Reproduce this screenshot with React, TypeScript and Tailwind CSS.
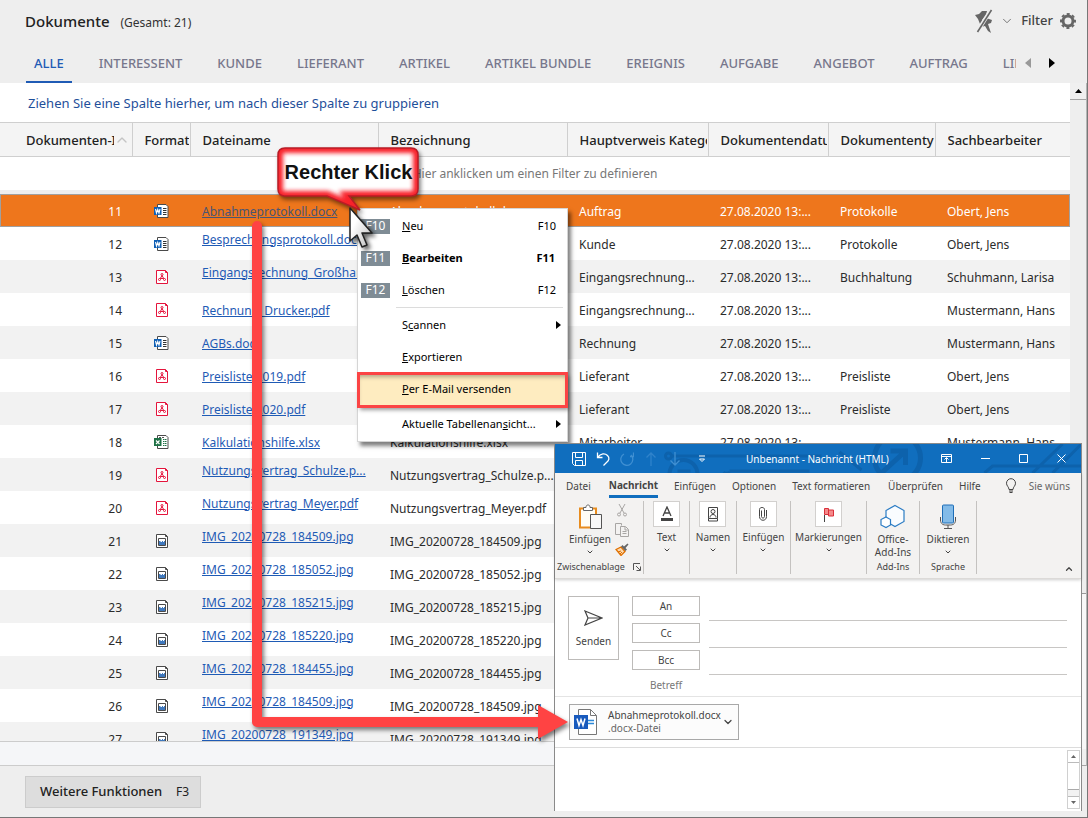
import React from 'react';
import { ChevronDown, ChevronUp } from 'lucide-react';

type Format = 'word' | 'pdf' | 'excel' | 'image';

interface Doc {
  id: number;
  format: Format;
  file: string;
  title: string;
  category?: string;
  date?: string;
  type?: string;
  owner?: string;
  raised?: boolean;
}

const tabs = [
  'ALLE',
  'INTERESSENT',
  'KUNDE',
  'LIEFERANT',
  'ARTIKEL',
  'ARTIKEL BUNDLE',
  'EREIGNIS',
  'AUFGABE',
  'ANGEBOT',
  'AUFTRAG',
  'LIEFERSCHEIN'
];

const docs: Doc[] = [
  { id: 11, format: 'word', file: 'Abnahmeprotokoll.docx', title: 'Abnahmeprotokoll.docx', category: 'Auftrag', date: '27.08.2020 13:...', type: 'Protokolle', owner: 'Obert, Jens' },
  { id: 12, format: 'word', file: 'Besprechungsprotokoll.docx', title: 'Besprechungsprotokoll', category: 'Kunde', date: '27.08.2020 13:...', type: 'Protokolle', owner: 'Obert, Jens', raised: true },
  { id: 13, format: 'pdf', file: 'Eingangsrechnung_Großhandel', title: 'Eingangsrechnung', category: 'Eingangsrechnung...', date: '27.08.2020 13:...', type: 'Buchhaltung', owner: 'Schuhmann, Larisa', raised: true },
  { id: 14, format: 'pdf', file: 'Rechnung_Drucker.pdf', title: 'Rechnung_Drucker.pdf', category: 'Eingangsrechnung...', date: '27.08.2020 13:...', owner: 'Mustermann, Hans' },
  { id: 15, format: 'word', file: 'AGBs.docx', title: 'AGBs.docx', category: 'Rechnung', date: '27.08.2020 15:...', owner: 'Mustermann, Hans' },
  { id: 16, format: 'pdf', file: 'Preisliste 2019.pdf', title: 'Preisliste 2019.pdf', category: 'Lieferant', date: '27.08.2020 13:...', type: 'Preisliste', owner: 'Obert, Jens' },
  { id: 17, format: 'pdf', file: 'Preisliste 2020.pdf', title: 'Preisliste 2020.pdf', category: 'Lieferant', date: '27.08.2020 13:...', type: 'Preisliste', owner: 'Obert, Jens' },
  { id: 18, format: 'excel', file: 'Kalkulationshilfe.xlsx', title: 'Kalkulationshilfe.xlsx', category: 'Mitarbeiter', date: '27.08.2020 13:...', owner: 'Mustermann, Hans' },
  { id: 19, format: 'pdf', file: 'Nutzungsvertrag_Schulze.p...', title: 'Nutzungsvertrag_Schulze.p...', raised: true },
  { id: 20, format: 'pdf', file: 'Nutzungsvertrag_Meyer.pdf', title: 'Nutzungsvertrag_Meyer.pdf', raised: true },
  { id: 21, format: 'image', file: 'IMG_20200728_184509.jpg', title: 'IMG_20200728_184509.jpg', raised: true },
  { id: 22, format: 'image', file: 'IMG_20200728_185052.jpg', title: 'IMG_20200728_185052.jpg', raised: true },
  { id: 23, format: 'image', file: 'IMG_20200728_185215.jpg', title: 'IMG_20200728_185215.jpg', raised: true },
  { id: 24, format: 'image', file: 'IMG_20200728_185220.jpg', title: 'IMG_20200728_185220.jpg', raised: true },
  { id: 25, format: 'image', file: 'IMG_20200728_184455.jpg', title: 'IMG_20200728_184455.jpg', raised: true },
  { id: 26, format: 'image', file: 'IMG_20200728_184509.jpg', title: 'IMG_20200728_184509.jpg', raised: true },
  { id: 27, format: 'image', file: 'IMG_20200728_191349.jpg', title: 'IMG_20200728_191349.jpg', raised: true }
];

const columns = ['Format', 'Dateiname', 'Bezeichnung', 'Hauptverweis Kategorie', 'Dokumentendatum', 'Dokumententyp', 'Sachbearbeiter'];

const FormatIcon: React.FC<{ format: Format }> = ({ format }) => {
  if (format === 'pdf') {
    return (
      <svg width="16" height="16" viewBox="0 0 16 16" fill="none" stroke="#e4143c">
        <path d="M2.500 1.500h9l2 2v11h-11z" fill="#fff" />
        <path d="M11.500 1.500v2h2" />
        <circle cx="8" cy="5.500" r="1" />
        <circle cx="5.500" cy="10.500" r="1" />
        <circle cx="10.500" cy="10.500" r="1" />
        <path d="M8 6.500L6 10M8 6.500l2 3.500M6.500 9.500h3" />
      </svg>
    );
  }
  if (format === 'image') {
    return (
      <svg width="16" height="16" viewBox="0 0 16 16" fill="none" stroke="#4a4a4a">
        <path d="M2.500 1.500h9l2 2v11h-11z" fill="#fff" />
        <path d="M11.500 1.500v2h2" />
        <path d="M4.500 5.500h7v7h-7z" fill="#fff" />
        <path d="M5 8h1.500v1H8V8h1v1h1V8h1v4H5z" fill="#3f78bd" stroke="none" />
      </svg>
    );
  }
  const color = format === 'word' ? '#0f5fb4' : '#1e7145';
  return (
    <svg width="16" height="16" viewBox="0 0 16 16" fill="none">
      <path d="M3.500 1.500h8.500l2 2v11h-10.500z" fill="#fff" stroke="#4a4a4a" />
      <path d="M9 5.500h3.500M9 7.500h3.500M9 9.500h3.500M9 11.500h3.500" stroke={format === 'word' ? '#333' : color} strokeDasharray={format === 'word' ? 'none' : '1.500 .5'} />
      <path d="M5 3.500h5" stroke={format === 'word' ? 'none' : '#555'} strokeDasharray="2 1" />
      <path d="M0 4h7.500v8H0z" fill={color} />
      {format === 'word' ? (
        <path d="M1.500 6l1 4 1.250-3.500L5 10l1-4" stroke="#fff" strokeWidth="1.100" />
      ) : (
        <path d="M2 6.500l3.500 3.500M5.500 6.500L2 10" stroke="#fff" strokeWidth="1.200" />
      )}
    </svg>
  );
};

const Header = () => (
  <header className="shrink-0 bg-[#eeeeee]">
    <div className="flex h-[42px] items-center justify-between pl-[25px] pr-[11px]">
      <div className="flex items-baseline gap-[11px]">
        <h1 className="text-[15px] font-medium text-[#222]">Dokumente</h1>
        <span className="text-xs text-[#333]">(Gesamt: 21)</span>
      </div>
      <div className="flex items-center gap-[7px] text-[#666]">
        <button aria-label="Filter lösen">
          <svg width="18" height="24" viewBox="0 0 18 24" fill="#666">
            <path d="M0 6l4-1 3-3h5l-1 4-4 5 1 3-3 1-2-5z" />
            <path d="M11 9l6 2-1 3-3 1 3 9-3-2-3-5-4 1z" />
            <path d="M16 1L2 23" stroke="#eee" strokeWidth="4" />
            <path d="M16.500 1L2.500 23" stroke="#666" strokeWidth="1.600" />
          </svg>
        </button>
        <ChevronDown className="h-[14px] w-[14px]" strokeWidth={1.500} />
        <span className="text-[13px] font-medium text-[#444]">Filter</span>
        <button aria-label="Einstellungen">
          <svg width="16" height="16" viewBox="0 0 16 16" fill="none" stroke="#666">
            <circle cx="8" cy="8" r="5" strokeWidth="3" />
            <circle cx="8" cy="8" r="7" strokeWidth="2" strokeDasharray="3 2.498" strokeDashoffset="1.500" />
          </svg>
        </button>
      </div>
    </div>
    <div className="flex h-[41px] items-stretch">
      <nav className="flex min-w-0 flex-1 items-stretch gap-[19px] overflow-hidden pl-[26px] text-[13px] font-medium text-[#77778c]">
        {tabs.map((tab, i) => (
          <button
            key={tab}
            className={
              i === 0
                ? 'shrink-0 border-b-2 border-[#1f5bb5] px-2 pt-1 text-[#1f5bb5]'
                : 'shrink-0 border-b-2 border-transparent px-2 pt-1'
            }
          >
            {tab}
          </button>
        ))}
      </nav>
      <div className="flex w-[71px] shrink-0 items-center gap-[18px] pl-[9px]">
        <button aria-label="Zurück">
          <svg width="6" height="10" viewBox="0 0 6 10" fill="#999"><path d="M6 0v10L0 5z" /></svg>
        </button>
        <button aria-label="Weiter">
          <svg width="6" height="10" viewBox="0 0 6 10"><path d="M0 0v10l6-5z" /></svg>
        </button>
      </div>
    </div>
  </header>
);

const DocumentTable = () => (
  <table className="w-full table-fixed border-collapse text-left text-xs text-[#2b2b2b]">
    <colgroup>
      <col className="w-[132px]" />
      <col className="w-[58px]" />
      <col className="w-[188px]" />
      <col className="w-[189px]" />
      <col className="w-[141px]" />
      <col className="w-[120px]" />
      <col className="w-[107px]" />
      <col />
    </colgroup>
    <thead>
      <tr className="h-[34px] border-y border-[#cfcfcf] bg-[#f4f4f4] text-[13px] text-[#222]">
        <th className="border-r border-[#cfcfcf] p-0 pl-[26px] font-medium">
          <div className="flex items-center pt-[2px]">
            <span className="w-[88px] overflow-hidden whitespace-nowrap">Dokumenten-ID</span>
            <ChevronUp className="h-4 w-4 shrink-0 text-[#c4c4c4]" strokeWidth={2} />
          </div>
        </th>
        {columns.map((name) => (
          <th key={name} className="border-r border-[#cfcfcf] py-0 pl-3 pr-px font-medium last:border-r-0">
            <div className="overflow-hidden whitespace-nowrap pt-[2px]">{name}</div>
          </th>
        ))}
      </tr>
      <tr className="h-[33px]">
        <td colSpan={8} className="p-0 pt-[2px] text-center text-[#777]">Hier anklicken um einen Filter zu definieren</td>
      </tr>
      <tr className="h-1 bg-[#eeeeee]">
        <td colSpan={8} className="p-0" />
      </tr>
    </thead>
    <tbody>
      {docs.map((doc, i) => (
        <tr
          key={doc.id}
          className={
            i === 0
              ? 'h-[33px] bg-[#ee761c] text-white outline outline-1 -outline-offset-1 outline-[#a0a0a0]'
              : 'h-[33px] even:bg-white odd:bg-[#f2f2f2]'
          }
        >
          <td className="pb-0 pl-0 pr-[10px] pt-[3px] text-right">{doc.id}</td>
          <td className="p-0 pl-px pt-px">
            <div className="flex justify-center"><FormatIcon format={doc.format} /></div>
          </td>
          <td className={doc.raised ? 'pb-[7px] pl-3 pr-0 pt-0' : 'pb-0 pl-3 pr-0 pt-[3px]'}>
            <div className="overflow-hidden whitespace-nowrap leading-5">
              <a href="#" className={i === 0 ? 'text-[#4a5573] underline' : 'text-[#1f5bb5] underline'}>{doc.file}</a>
            </div>
          </td>
          <td className="truncate pb-0 pl-3 pr-0 pt-[3px]">{doc.title}</td>
          <td className="truncate pb-0 pl-3 pr-0 pt-[3px]">{doc.category}</td>
          <td className="truncate pb-0 pl-3 pr-0 pt-[3px]">{doc.date}</td>
          <td className="truncate pb-0 pl-3 pr-0 pt-[3px]">{doc.type}</td>
          <td className="truncate pb-0 pl-3 pr-0 pt-[3px]">{doc.owner}</td>
        </tr>
      ))}
    </tbody>
  </table>
);

interface MenuItemProps {
  hotkey: string;
  rest: string;
  before?: string;
  shortcut?: string;
  bold?: boolean;
  submenu?: boolean;
}

const MenuItem: React.FC<MenuItemProps> = ({ hotkey, rest, before = '', shortcut, bold, submenu }) => (
  <button className="flex h-8 w-full items-center text-left">
    <span className="flex w-[44px] shrink-0 pl-[3px]">
      {shortcut && (
        <span className="flex h-[15px] w-[29px] items-center justify-center bg-[#7f8c95] text-xs text-white">{shortcut}</span>
      )}
    </span>
    <span className={bold ? 'flex-1 font-bold' : 'flex-1'}>
      {before}<u>{hotkey}</u>{rest}
    </span>
    {shortcut && <span className={bold ? 'pr-3 font-bold' : 'pr-[11px]'}>{shortcut}</span>}
    {submenu && (
      <svg width="5" height="8" viewBox="0 0 5 8" className="mr-[6px]"><path d="M0 0v8l5-4z" /></svg>
    )}
  </button>
);

const ContextMenu = () => (
  <div className="absolute left-[357px] top-[208px] w-[211px] border border-[#d5d5d5] bg-white pt-px text-[11px] text-black shadow-[3px_4px_4px_rgba(0,0,0,0.5)]">
    <MenuItem hotkey="N" rest="eu" shortcut="F10" />
    <MenuItem hotkey="B" rest="earbeiten" shortcut="F11" bold />
    <MenuItem hotkey="L" rest="öschen" shortcut="F12" />
    <hr className="my-px ml-[38px] mr-1 border-[#dcdcdc]" />
    <MenuItem before="S" hotkey="c" rest="annen" submenu />
    <MenuItem hotkey="E" rest="xportieren" />
    <div className="bg-[#feecc0] pb-[2px] shadow-[inset_0_4px_4px_rgba(0,0,0,0.3),2px_3px_4px_rgba(0,0,0,0.4)] outline-[3px] -outline-offset-2 outline-[#fb4444] outline">
      <MenuItem hotkey="P" rest="er E-Mail versenden" />
    </div>
    <div className="py-px">
      <MenuItem before="Aktuelle Tabellenan" hotkey="s" rest="icht..." submenu />
    </div>
  </div>
);

const RibbonGroup: React.FC<{ label: string; width: string; children: React.ReactNode }> = ({ label, width, children }) => (
  <div className={`flex flex-col items-center border-r border-[#c4c2c0] ${width}`}>
    <button className="flex flex-col items-center">
      <span className="mb-[3px] flex h-[26px] w-[27px] items-center justify-center border border-[#d2d0ce] bg-white">{children}</span>
      <span>{label}</span>
      <ChevronDown className="mt-[2px] h-2 w-2" strokeWidth={3} />
    </button>
  </div>
);

const TitleBar = () => (
  <div className="relative flex h-[29px] shrink-0 items-center bg-[#106ebe] text-white">
    <svg className="absolute inset-0 h-full w-full" viewBox="0 0 527 29" preserveAspectRatio="xMidYMid slice" fill="none" stroke="#0d62ac" strokeWidth="3">
      <circle cx="114" cy="12" r="3" />
      <path d="M117 12h150M175 28a4 4 0 0 1-6 0M175 27h80" />
      <circle cx="129" cy="30" r="14" strokeWidth="4" />
      <path d="M123 27h13" />
      <circle cx="343" cy="14" r="23" strokeWidth="5" />
      <path d="M328 28l22-20M336 7h15v14" strokeWidth="5" />
      <path d="M285 8l22 18M430 29l8-7h90M478 29l30-29M498 29l29-29" />
    </svg>
    <div className="relative flex flex-1 items-center pl-[17px]">
      <div className="flex items-center gap-[10px]">
        <button aria-label="Speichern">
          <svg width="14" height="14" viewBox="0 0 14 14" fill="none" stroke="#fff"><path d="M.5.500h13v13H2.500l-2-2zM3.500.500v5h7v-5M3.500 13.500v-5h7v5" /></svg>
        </button>
        <button aria-label="Rückgängig">
          <svg width="14" height="14" viewBox="0 0 14 14" fill="none" stroke="#fff" strokeWidth="1.300"><path d="M1.500.5v5h5M1.500 5.500C5 1 9 1 11.500 3.500s1.500 5-1 7L7.500 13.500" /></svg>
        </button>
        <button aria-label="Wiederholen">
          <svg width="14" height="14" viewBox="0 0 14 14" fill="none" stroke="#3f8fd2" strokeWidth="1.300"><path d="M13.500.5v4H10M11 3a6 6 0 1 1-7-1" /></svg>
        </button>
        <button aria-label="Vorheriges">
          <svg width="14" height="14" viewBox="0 0 14 14" fill="none" stroke="#2f83cb" strokeWidth="1.300"><path d="M7 14V1M2.500 5.500L7 1l4.500 4.500" /></svg>
        </button>
        <button aria-label="Nächstes">
          <svg width="14" height="14" viewBox="0 0 14 14" fill="none" stroke="#3f8fd2" strokeWidth="1.300"><path d="M7 0v13M2.500 8.500L7 13l4.500-4.500" /></svg>
        </button>
        <button aria-label="Anpassen" className="ml-1">
          <svg width="12" height="8" viewBox="0 0 12 8" fill="none" stroke="#fff"><path d="M3 1h6M3.500 4L6 6.500 8.500 4z" /></svg>
        </button>
      </div>
      <span className="ml-[38px]">Unbenannt - Nachricht (HTML)</span>
    </div>
    <div className="relative flex items-center gap-[29px] pr-[15px]">
      <button aria-label="Menüband">
        <svg width="11" height="10" viewBox="0 0 11 10" fill="none" stroke="#fff"><path d="M.5.500h10v8H.5zM.5 2.500h10M5.500 8V4M3.500 5.500l2-2 2 2" /></svg>
      </button>
      <button aria-label="Minimieren">
        <svg width="9" height="9" viewBox="0 0 9 9" stroke="#fff"><path d="M0 4.500h9" /></svg>
      </button>
      <button aria-label="Maximieren">
        <svg width="9" height="9" viewBox="0 0 9 9" stroke="#fff" fill="none"><path d="M.5.500h8v8h-8z" /></svg>
      </button>
      <button aria-label="Schließen">
        <svg width="9" height="9" viewBox="0 0 9 9" stroke="#fff"><path d="M.5.500l8 8M8.500.500l-8 8" /></svg>
      </button>
    </div>
  </div>
);

const Ribbon = () => (
  <div className="shrink-0 border-b border-[#dcdad8] bg-[#f3f2f1] shadow-[0_1px_3px_rgba(0,0,0,0.2)]">
    <nav className="flex h-[25px] items-center gap-4 whitespace-nowrap pl-[11px]">
      <button>Datei</button>
      <button className="ml-[2px] h-full border-b-[3px] border-[#106ebe] pt-[2px] font-bold">Nachricht</button>
      <button>Einfügen</button>
      <button>Optionen</button>
      <button>Text formatieren</button>
      <button className="ml-[2px]">Überprüfen</button>
      <button>Hilfe</button>
      <svg className="ml-2" width="12" height="16" viewBox="0 0 12 16" fill="none" stroke="#444"><path d="M4 11.500C4 9 1.500 8 1.500 5.200a4.500 4.500 0 0 1 9 0C10.500 8 8 9 8 11.500zM4 13h4M4.500 14.500h3" /></svg>
      <span className="-ml-1 text-[#666]">Sie wüns</span>
    </nav>
    <div className="flex h-[80px] pb-1 pt-[3px]">
      <div className="flex w-[89px] flex-col justify-between border-r border-[#c4c2c0]">
        <div className="flex justify-between px-[14px]">
          <button className="flex flex-col items-center">
            <svg className="mb-[2px] mt-[3px]" width="24" height="26" viewBox="0 0 24 26" fill="none">
              <path d="M2 4.500h16v19H2z" fill="#fffdf5" stroke="#e88c1e" strokeWidth="2" />
              <path d="M5.500 6.500v-3h2.500C8 1.500 9 1 10 1s2 .5 2 2.500h2.500v3z" fill="#fff" stroke="#666" />
              <path d="M12.500 10.500h11v14h-11z" fill="#f8f8f8" stroke="#555" />
            </svg>
            <span>Einfügen</span>
            <ChevronDown className="mt-[2px] h-2 w-2" strokeWidth={3} />
          </button>
          <div className="flex flex-col items-center gap-[6px] pt-[3px]">
            <button aria-label="Ausschneiden">
              <svg width="10" height="13" viewBox="0 0 10 13" fill="none" stroke="#a8a6a4"><path d="M2 0l5 9M8 0L3 9" /><circle cx="2" cy="10.500" r="1.500" /><circle cx="8" cy="10.500" r="1.500" /></svg>
            </button>
            <button aria-label="Kopieren">
              <svg width="14" height="14" viewBox="0 0 14 14" fill="none" stroke="#a8a6a4"><path d="M5.500 11.500h-5v-11h6v2M5.500 3.500h5l3 3v7h-8zM10 4v3h3M7.500 8.500h4M7.500 10.500h4" /></svg>
            </button>
            <button aria-label="Format übertragen">
              <svg width="14" height="13" viewBox="0 0 14 13" fill="none">
                <path d="M1 6.500l5-2.500 4 4.500L6 12.500z" fill="#fbd9ae" stroke="#e07000" strokeWidth="1.300" />
                <path d="M3 9l3-1M5 11l2-2" stroke="#e07000" />
                <path d="M6 3.500l4.500 4.500L12 6.500 10.500 5 13.500 1.500 12.500.500 9 3.500 7.500 2z" fill="#666" />
              </svg>
            </button>
          </div>
        </div>
        <div className="flex items-center justify-between whitespace-nowrap pl-[2px] pr-[2px] text-[9px]">
          <span>Zwischenablage</span>
          <svg width="8" height="8" viewBox="0 0 8 8" fill="none" stroke="#555"><path d="M.5 7V.5H7M3 3l4 4M7.500 3.500v4h-4" /></svg>
        </div>
      </div>
      <RibbonGroup label="Text" width="w-[46px]">
        <svg width="14" height="16" viewBox="0 0 14 16" fill="none" stroke="#444"><path d="M3 10l4-9 4 9M4.500 7h5" strokeWidth="1.300" /><path d="M1 13.500h12" strokeWidth="3" /></svg>
      </RibbonGroup>
      <RibbonGroup label="Namen" width="w-[47px]">
        <svg width="12" height="15" viewBox="0 0 12 15" fill="none" stroke="#444"><path d="M1.500.500h9v11h-9zM1.500 11.500v2.500h9v-2.500M3 10.500c0-4 6-4 6 0" /><circle cx="6" cy="4.500" r="2" /></svg>
      </RibbonGroup>
      <RibbonGroup label="Einfügen" width="w-[54px]">
        <svg width="8" height="14" viewBox="0 0 8 14" fill="none" stroke="#444"><path d="M2.500 3.500v6c0 2 3 2 3 0v-7c0-2.700-5-2.700-5 0v7c0 5 7 5 7 0V3" /></svg>
      </RibbonGroup>
      <RibbonGroup label="Markierungen" width="w-[76px]">
        <svg width="12" height="15" viewBox="0 0 12 15" fill="#f58a8a" stroke="#d9303a"><path d="M1.500 1.500h4v6h-4zM5.500 3h5v6h-5z" /><path d="M1.500 8v7" stroke="#444" /></svg>
      </RibbonGroup>
      <div className="flex w-[53px] flex-col items-center justify-between border-r border-[#c4c2c0]">
        <button className="flex flex-col items-center">
          <svg className="mb-[3px] mt-[3px]" width="26" height="26" viewBox="0 0 26 26" fill="none" stroke="#2b7cc4" strokeWidth="1.200">
            <path d="M15 1.500l9 5v11l-9 5-9-5v-11z" fill="#f9fcff" />
            <path d="M6 13l4.500 2.500v5.500L6 23.500 1 21v-5.500z" fill="#fff" />
          </svg>
          <span className="leading-[13px]">Office-<br />Add-Ins</span>
        </button>
        <span className="text-[9px] leading-[14px]">Add-Ins</span>
      </div>
      <div className="flex w-[57px] flex-col items-center justify-between border-r border-[#c4c2c0]">
        <button className="flex flex-col items-center">
          <svg className="mb-[2px] mt-[3px]" width="18" height="26" viewBox="0 0 18 26" fill="none">
            <path d="M1.500 13v3c0 4 3 5 5 5h5c2 0 5-1 5-5v-3M9 21v3M5 24.500h8" stroke="#555" />
            <rect x="3.500" y="1" width="11" height="18" rx="1" fill="#83bbe8" stroke="#1f6fb8" />
          </svg>
          <span>Diktieren</span>
          <ChevronDown className="mt-[2px] h-2 w-2" strokeWidth={3} />
        </button>
        <span className="text-[9px] leading-[14px]">Sprache</span>
      </div>
      <div className="flex flex-1 items-end justify-end pr-[7px]">
        <ChevronUp className="h-[10px] w-[10px]" strokeWidth={3} />
      </div>
    </div>
  </div>
);

const MailWindow = () => (
  <section className="absolute left-[554px] top-[443px] flex h-[368px] w-[528px] flex-col border-l border-r border-t border-[#8a8a8a] bg-white text-[10px] leading-[14px] text-[#444]">
    <TitleBar />
    <Ribbon />
    <div className="flex gap-[13px] border-b border-[#e4e4e4] pb-1 pl-[13px] pr-[14px] pt-[17px]">
      <button className="flex h-16 w-[51px] flex-col items-center justify-center gap-2 border border-[#bdbbb9] pt-px">
        <svg width="19" height="16" viewBox="0 0 19 16" fill="none" stroke="#444" strokeWidth="1.200"><path d="M1 1l17 7L1 15l3-7zM4 8h14" /></svg>
        Senden
      </button>
      <div className="flex flex-1 flex-col gap-[7px]">
        {['An', 'Cc', 'Bcc'].map((name) => (
          <div key={name} className="flex h-5 gap-[9px]">
            <button className="w-[68px] border border-[#bdbbb9]">{name}</button>
            <input aria-label={name} className="-mb-[5px] flex-1 border-b border-[#c8c6c4] outline-none" />
          </div>
        ))}
        <span className="w-[68px] pt-px text-center text-[#777]">Betreff</span>
      </div>
    </div>
    <div className="border-b border-[#dcdcdc] py-[7px] pl-[14px]">
      <button className="flex h-9 w-[170px] items-center border border-[#a8a8a8] bg-[#fcfcfc] pl-1 text-left">
        <svg width="24" height="26" viewBox="0 0 24 26" fill="none">
          <path d="M4.500.500h12l6 6v19h-18z" fill="#fff" stroke="#777" />
          <path d="M16.500.500v6h6" stroke="#777" />
          <path d="M14 11.500h6M14 14.500h6" stroke="#2b88d8" strokeWidth="1.500" />
          <path d="M0 6h14v14H0z" fill="#185abd" />
          <path d="M3 9.500l2 7 2-6 2 6 2-7" stroke="#fff" strokeWidth="1.500" />
        </svg>
        <span className="flex-1 pl-[10px] leading-[13px]">
          Abnahmeprotokoll.docx<br />
          <span className="text-[#666]">.docx-Datei</span>
        </span>
        <ChevronDown className="mr-1 h-3 w-3" strokeWidth={2.500} />
      </button>
    </div>
    <div className="flex flex-1 justify-end pb-[2px] pr-px pt-[2px]">
      <div className="flex w-[13px] flex-col border border-[#d0d0d0] bg-[#f2f2f2]">
        <div className="flex h-3 items-center justify-center border-b border-[#bbb] bg-white">
          <svg width="5" height="3" viewBox="0 0 5 3" fill="#666"><path d="M0 3h5L2.500 0z" /></svg>
        </div>
        <div className="h-[27px] border-b border-[#aaa] bg-white" />
        <div className="flex-1" />
        <div className="flex h-3 items-center justify-center border-t border-[#bbb] bg-white">
          <svg width="5" height="3" viewBox="0 0 5 3" fill="#666"><path d="M0 0h5L2.500 3z" /></svg>
        </div>
      </div>
    </div>
  </section>
);

const Annotations = () => (
  <>
    <svg className="pointer-events-none absolute left-0 top-0 drop-shadow-[2px_3px_2px_rgba(0,0,0,0.5)]" width="580" height="760" viewBox="0 0 580 760" fill="none">
      <path d="M257 226v496h284" stroke="#ff4343" strokeWidth="10" strokeLinecap="round" strokeLinejoin="round" />
      <path d="M538 705l30 17-30 17z" fill="#ff4343" />
    </svg>
    <div className="absolute left-[274px] top-[144px]">
      <svg width="150" height="110" viewBox="0 0 150 110" fill="none" className="drop-shadow-[2px_3px_2px_rgba(0,0,0,0.5)]">
        <defs>
          <filter id="soft" x="-10%" y="-10%" width="120%" height="120%"><feGaussianBlur stdDeviation="2" /></filter>
          <clipPath id="bubble"><path d="M11 4h126q7 0 7 7v34q0 7-7 7H75l11 14-33-14H11q-7 0-7-7V11q0-7 7-7z" /></clipPath>
        </defs>
        <g clipPath="url(#bubble)">
          <path d="M0 0h150v70H0z" fill="#fff" />
          <path d="M11 4h126q7 0 7 7v34q0 7-7 7H75l11 14-33-14H11q-7 0-7-7V11q0-7 7-7z" stroke="#f8202c" strokeWidth="10" filter="url(#soft)" />
        </g>
        <path d="M11 4h126q7 0 7 7v34q0 7-7 7H75l11 14-33-14H11q-7 0-7-7V11q0-7 7-7z" stroke="#b81c26" strokeWidth="1.500" />
      </svg>
      <span className="absolute left-0 top-4 w-[149px] text-center font-['Liberation_Sans',Arial,sans-serif] text-[20px] font-bold leading-6 text-[#111]">
        Rechter Klick
      </span>
    </div>
    <svg className="absolute left-[348px] top-[206px] drop-shadow-[3px_3px_2px_rgba(0,0,0,0.6)]" width="28" height="44" viewBox="0 0 28 44">
      <defs>
        <linearGradient id="pointer" x1="0" y1="0" x2="1" y2="1">
          <stop offset="0.300" stopColor="#fff" />
          <stop offset="1" stopColor="#bbb" />
        </linearGradient>
      </defs>
      <path d="M2 2v33l7-6 5 12 5-2-5-12h10z" fill="url(#pointer)" stroke="#222" strokeWidth="1.500" strokeLinejoin="round" />
    </svg>
  </>
);

const App: React.FC = () => (
  <div className="relative flex h-screen flex-col overflow-hidden border-b border-r border-[#777] bg-white font-['Noto_Sans','Open_Sans',sans-serif]">
    <Header />
    <main className="flex min-h-0 flex-1">
      <div className="flex min-w-0 flex-1 flex-col">
        <div className="flex h-[39px] shrink-0 items-center pl-7 pt-[2px] text-[13px] text-[#1f4f9a]">
          Ziehen Sie eine Spalte hierher, um nach dieser Spalte zu gruppieren
        </div>
        <div className="min-h-0 flex-1 overflow-hidden">
          <DocumentTable />
        </div>
        <div className="h-[25px] shrink-0 border-y border-[#cccccc] bg-[#f5f6f8]" />
      </div>
      <div className="flex w-[17px] shrink-0 flex-col border-r border-[#b5b5b5] bg-[#f8f8f8]">
        <div className="flex h-[17px] items-center justify-center border-b border-[#a5a5a5] bg-[#f0f0f0]">
          <svg width="7" height="4" viewBox="0 0 7 4"><path d="M0 4h7L3.500 0z" /></svg>
        </div>
        <div className="flex-[494] border-b border-[#999] bg-[#eeeeee]" />
        <div className="flex-[155]" />
        <div className="h-[17px] border-b border-[#a5a5a5] bg-[#f0f0f0]" />
      </div>
    </main>
    <footer className="flex h-[51px] shrink-0 items-center bg-[#eeeeee] pl-[25px]">
      <button className="flex h-8 items-center gap-[14px] border border-[#cccccc] bg-[#dddddd] pl-[14px] pr-[11px] text-[#222]">
        <span className="text-[13px] font-medium">Weitere Funktionen</span>
        <span className="text-xs">F3</span>
      </button>
    </footer>
    <ContextMenu />
    <MailWindow />
    <Annotations />
  </div>
);

export default App;
